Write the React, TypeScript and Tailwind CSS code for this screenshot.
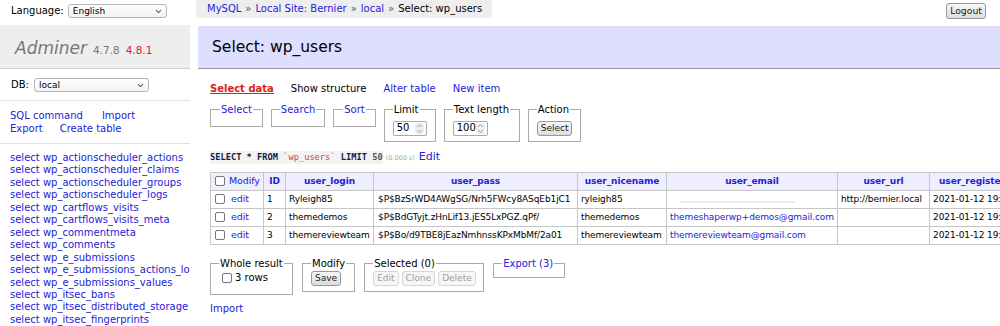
import React from "react";

const LINK = "text-[#2222d8]";

function Chevron() {
  return (
    <svg width="7" height="5" viewBox="0 0 7 5" className="shrink-0">
      <path d="M1 1.2 L3.5 3.6 L6 1.2" fill="none" stroke="#555" strokeWidth="1.1" />
    </svg>
  );
}

function FakeSelect({ value, w }: { value: string; w: string }) {
  return (
    <div
      className={`${w} h-[14px] border border-[#b5b5b5] rounded-[3px] bg-gradient-to-b from-white to-[#f2f2f2] flex items-center justify-between pl-[4px] pr-[4px] text-[9px] leading-[12px]`}
    >
      <span>{value}</span>
      <Chevron />
    </div>
  );
}

function Spinner() {
  return (
    <svg width="7" height="11" viewBox="0 0 7 11">
      <path d="M1.2 4 L3.5 1.6 L5.8 4" fill="none" stroke="#999" strokeWidth="0.9" />
      <path d="M1.2 7 L3.5 9.4 L5.8 7" fill="none" stroke="#999" strokeWidth="0.9" />
    </svg>
  );
}

function NumInput({ value, w }: { value: string; w: string }) {
  return (
    <div
      className={`${w} h-[15px] border border-[#aaa] rounded-[2px] bg-white flex items-center justify-between pl-[3px] pr-[2px] text-[10px]`}
    >
      <span>{value}</span>
      <span className="h-[11px] w-[9px] bg-[#eee] rounded-[2px] flex items-center justify-center">
        <Spinner />
      </span>
    </div>
  );
}

function Btn({ children, disabled }: { children: React.ReactNode; disabled?: boolean }) {
  return (
    <span
      className={
        disabled
          ? "inline-flex items-center h-[15px] px-[3px] border border-[#d5d5d5] rounded-[3px] bg-[#f6f6f6] text-[#a0a0a0] text-[9px]"
          : "inline-flex items-center h-[15px] px-[3px] border border-[#999] rounded-[3px] bg-gradient-to-b from-[#f7f7f7] to-[#dcdcdc] text-[#222] text-[9px]"
      }
    >
      {children}
    </span>
  );
}

function Check() {
  return <span className="inline-block w-[10px] h-[10px] border border-[#777] rounded-[2px] bg-white shrink-0" />;
}

const tables = [
  "wp_actionscheduler_actions",
  "wp_actionscheduler_claims",
  "wp_actionscheduler_groups",
  "wp_actionscheduler_logs",
  "wp_cartflows_visits",
  "wp_cartflows_visits_meta",
  "wp_commentmeta",
  "wp_comments",
  "wp_e_submissions",
  "wp_e_submissions_actions_log",
  "wp_e_submissions_values",
  "wp_itsec_bans",
  "wp_itsec_distributed_storage",
  "wp_itsec_fingerprints",
];

const rows = [
  { id: "1", login: "Ryleigh85", pass: "$P$BzSrWD4AWgSG/Nrh5FWcy8ASqEb1jC1", nice: "ryleigh85", email: "", url: "http://bernier.local" },
  { id: "2", login: "themedemos", pass: "$P$BdGTyjt.zHnLif13.jES5LxPGZ.qPf/", nice: "themedemos", email: "themeshaperwp+demos@gmail.com", url: "" },
  { id: "3", login: "themereviewteam", pass: "$P$Bo/d9TBE8jEazNmhnssKPxMbMf/2a01", nice: "themereviewteam", email: "themereviewteam@gmail.com", url: "" },
];

const td = "border border-[#c6c6c6] h-[18px] px-[3px] py-0 whitespace-nowrap overflow-hidden align-middle";
const th = "border border-[#c6c6c6] h-[17px] px-[3px] py-0 whitespace-nowrap overflow-hidden align-middle font-bold text-center " + LINK;

export default function App() {
  return (
    <div className="w-[1000px] h-[326px] overflow-hidden bg-white flex text-[10px] leading-[12.5px] text-black font-['DejaVu_Sans',Verdana,sans-serif]">
      {/* Sidebar */}
      <div className="w-[190px] shrink-0 overflow-hidden">
        <div className="h-[25px] flex items-start pt-[4px] pl-[11px]">
          <span className="mt-[1px]">Language:</span>
          <div className="ml-[4px]">
            <FakeSelect value="English" w="w-[99px]" />
          </div>
        </div>
        <div className="h-[44px] bg-[#eeeeee] border-b border-[#d0d0d0] flex items-baseline pl-[15px] pt-[12px]">
          <span className="italic text-[17px] leading-[22px] text-[#777]">Adminer</span>
          <span className="ml-[6px] text-[10.5px] text-[#777]">4.7.8</span>
          <span className="ml-[6px] text-[10.5px] text-[#e0203a]">4.8.1</span>
        </div>
        <div className="pt-[9px] h-[31px] flex items-start pl-[11px]">
          <span className="mt-[1px]">DB:</span>
          <div className="ml-[5px]">
            <FakeSelect value="local" w="w-[115px]" />
          </div>
        </div>
        <div className="border-t border-[#e2e2e2]" />
        <div className="pt-[8px] pb-[8px] pl-[10px] leading-[13px]">
          <div className="flex gap-[19px]">
            <span className={LINK}>SQL command</span>
            <span className={LINK}>Import</span>
          </div>
          <div className="flex gap-[17px]">
            <span className={LINK}>Export</span>
            <span className={LINK}>Create table</span>
          </div>
        </div>
        <div className="border-t border-[#e2e2e2]" />
        <div className="pt-[8px] pl-[10px] leading-[12.45px]">
          {tables.map((t) => (
            <div key={t} className={"whitespace-nowrap " + LINK}>
              select {t}
            </div>
          ))}
        </div>
      </div>

      {/* Main */}
      <div className="flex-1 min-w-0 ml-[6px] overflow-hidden">
        <div className="h-[26px] flex items-start justify-between">
          <div className="h-[18px] bg-[#eeeeee] pl-[11px] pr-[10px] flex items-center whitespace-nowrap">
            <span className={LINK}>MySQL</span>
            <span className="mx-[4px] text-[#555]">»</span>
            <span className={LINK}>Local Site: Bernier</span>
            <span className="mx-[4px] text-[#555]">»</span>
            <span className={LINK}>local</span>
            <span className="mx-[4px] text-[#555]">»</span>
            <span>Select: wp_users</span>
          </div>
          <div className="mt-[3px] mr-[14px]">
            <span className="inline-flex items-center h-[16px] px-[3px] border border-[#999] rounded-[3px] bg-gradient-to-b from-[#f7f7f7] to-[#dcdcdc] text-[#222] text-[9.3px]">
              Logout
            </span>
          </div>
        </div>
        <div className="ml-[2px] h-[43px] bg-[#dedeff] border-b border-[#999] flex items-center pl-[14px] text-[15.5px]">
          Select: wp_users
        </div>

        <div className="pl-[14px]">
          {/* tabs */}
          <div className="mt-[14px] flex gap-[17px] whitespace-nowrap">
            <span className="font-bold text-[#e0201a] underline">Select data</span>
            <span>Show structure</span>
            <span className={LINK}>Alter table</span>
            <span className={LINK}>New item</span>
          </div>

          {/* fieldsets */}
          <div className="mt-[8px] flex items-start gap-[8px] whitespace-nowrap">
            <fieldset className="border border-[#aaa] pl-[9px] pr-[9px] pb-[3px] w-[51px]">
              <legend className={"px-[1px] " + LINK}>Select</legend>
              <div className="h-[7px]" />
            </fieldset>
            <fieldset className="border border-[#aaa] pl-[8px] pr-[8px] pb-[3px] w-[54px]">
              <legend className={"px-[1px] " + LINK}>Search</legend>
              <div className="h-[7px]" />
            </fieldset>
            <fieldset className="border border-[#aaa] pl-[9px] pr-[9px] pb-[3px] w-[42px]">
              <legend className={"px-[1px] " + LINK}>Sort</legend>
              <div className="h-[7px]" />
            </fieldset>
            <fieldset className="border border-[#aaa] pl-[8px] pr-[8px] pb-[5px] w-[52px]">
              <legend className="px-[1px]">Limit</legend>
              <div className="mt-[5px]">
                <NumInput value="50" w="w-[34px]" />
              </div>
            </fieldset>
            <fieldset className="border border-[#aaa] pl-[8px] pr-[8px] pb-[5px] w-[76px]">
              <legend className="px-[1px]">Text length</legend>
              <div className="mt-[5px]">
                <NumInput value="100" w="w-[35px]" />
              </div>
            </fieldset>
            <fieldset className="border border-[#aaa] pl-[8px] pr-[8px] pb-[5px] w-[53px]">
              <legend className="px-[1px]">Action</legend>
              <div className="mt-[5px]">
                <Btn>Select</Btn>
              </div>
            </fieldset>
          </div>

          {/* SQL */}
          <div className="mt-[9px] flex items-baseline whitespace-nowrap">
            <code className="bg-[#f3f3f3] font-['DejaVu_Sans_Mono',monospace] font-bold text-[8.7px] text-[#1a1a4a]">
              SELECT * FROM <span className="text-[#c44] font-normal">`wp_users`</span> LIMIT <span className="text-[#555]">50</span>
            </code>
            <span className="ml-[3px] text-[6.5px] text-[#aaa]">(0.000 s)</span>
            <span className={"ml-[4px] text-[11px] " + LINK}>Edit</span>
          </div>

          {/* Table */}
          <table className="mt-[7px] table-fixed border-collapse w-[880px] text-[9px] tracking-[-0.1px]">
            <colgroup>
              <col className="w-[53px]" />
              <col className="w-[22px]" />
              <col className="w-[88px]" />
              <col className="w-[204px]" />
              <col className="w-[89px]" />
              <col className="w-[171px]" />
              <col className="w-[92px]" />
              <col className="w-[161px]" />
            </colgroup>
            <thead>
              <tr className="bg-[#eeeeff]">
                <td className={td}>
                  <div className="flex items-center gap-[4px] pl-[1px]">
                    <Check />
                    <span className={"text-[9.5px] " + LINK}>Modify</span>
                  </div>
                </td>
                <th className={th}>ID</th>
                <th className={th}>user_login</th>
                <th className={th}>user_pass</th>
                <th className={th}>user_nicename</th>
                <th className={th}>user_email</th>
                <th className={th}>user_url</th>
                <th className={th + " text-left"}>&nbsp;&nbsp;user_registered</th>
              </tr>
            </thead>
            <tbody>
              {rows.map((r) => (
                <tr key={r.id}>
                  <td className={td}>
                    <div className="flex items-center gap-[6px] pl-[1px]">
                      <Check />
                      <span className={"text-[9.5px] " + LINK}>edit</span>
                    </div>
                  </td>
                  <td className={td}>{r.id}</td>
                  <td className={td}>{r.login}</td>
                  <td className={td + " pl-[4px]"}>{r.pass}</td>
                  <td className={td}>{r.nice}</td>
                  <td className={td}>
                    {r.email ? (
                      <span className={LINK}>{r.email}</span>
                    ) : (
                      <div className="ml-[10px] mt-[6px] w-[115px] h-[2px] bg-[#ececec]" />
                    )}
                  </td>
                  <td className={td}>{r.url}</td>
                  <td className={td}>2021-01-12 19:09:49</td>
                </tr>
              ))}
            </tbody>
          </table>

          {/* bottom fieldsets */}
          <div className="mt-[13px] flex items-start gap-[9px] whitespace-nowrap">
            <fieldset className="border border-[#aaa] pl-[11px] pr-[8px] pb-[9px] w-[83px]">
              <legend className="px-[1px] -ml-[3px]">Whole result</legend>
              <div className="mt-[2px] flex items-center gap-[3px]">
                <Check />
                <span>3 rows</span>
              </div>
            </fieldset>
            <fieldset className="border border-[#aaa] pl-[8px] pr-[8px] pb-[5px] w-[52px]">
              <legend className="px-[1px]">Modify</legend>
              <div className="mt-[1px]">
                <Btn>Save</Btn>
              </div>
            </fieldset>
            <fieldset className="border border-[#aaa] pl-[8px] pr-[5px] pb-[5px] w-[120px]">
              <legend className="px-[1px]">Selected (0)</legend>
              <div className="mt-[1px] flex gap-[3px]">
                <Btn disabled>Edit</Btn>
                <Btn disabled>Clone</Btn>
                <Btn disabled>Delete</Btn>
              </div>
            </fieldset>
            <fieldset className="border border-[#aaa] pl-[8px] pr-[8px] pb-[3px] w-[72px]">
              <legend className={"px-[1px] " + LINK}>Export (3)</legend>
              <div className="h-[4px]" />
            </fieldset>
          </div>

          <div className={"mt-[8px] " + LINK}>Import</div>
        </div>
      </div>
    </div>
  );
}
